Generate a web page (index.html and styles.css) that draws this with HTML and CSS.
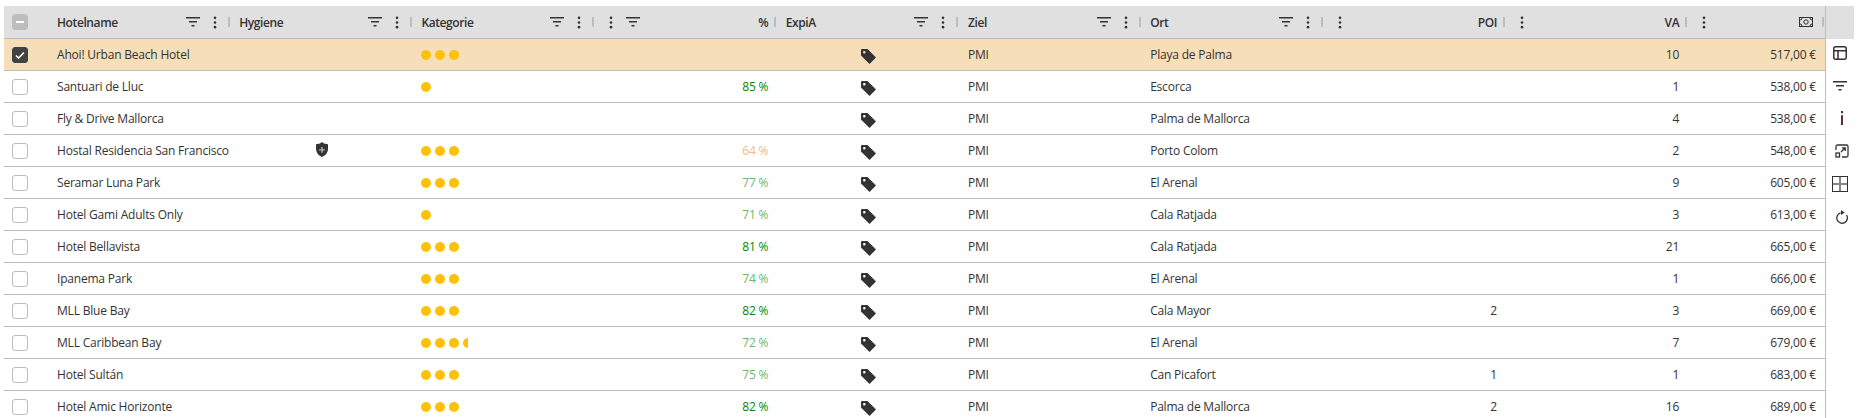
FILE: index.html
```html
<!DOCTYPE html>
<html lang="de">
<head>
  <meta charset="UTF-8">
  <title>Hotelliste</title>
  <link rel="stylesheet" href="styles.css">
</head>
<body>
  <svg class="sprites" width="0" height="0">
    <symbol id="i-filter" viewBox="0 0 14 10"><path d="M0 0h14v1.6H0zM3 4h8v1.6H3zM5.500 8h3v1.600h-3z"/></symbol>
    <symbol id="i-dots" viewBox="0 0 4 14"><circle cx="2" cy="2" r="1.400"/><circle cx="2" cy="7" r="1.400"/><circle cx="2" cy="12" r="1.400"/></symbol>
    <symbol id="i-tag" viewBox="0 0 15 15"><path fill-rule="evenodd" d="M1 0h5.500l8 8q.5.500 0 1l-5.500 5.500q-.5.500-1 0l-8-8V1q0-1 1-1zM3.300 2a1.300 1.300 0 1 0 0 2.600 1.300 1.300 0 0 0 0-2.600z"/></symbol>
  </svg>

  <div class="page">
    <div class="grid-wrap">
      <table class="grid">
        <colgroup>
          <col class="c-check"><col class="c-wide"><col class="c-wide"><col class="c-wide"><col class="c-wide"><col class="c-wide"><col class="c-wide"><col class="c-wide"><col class="c-wide"><col class="c-wide"><col>
        </colgroup>
        <thead>
          <tr>
            <th><span class="check check-some"></span></th>
            <th><div class="head"><span class="title">Hotelname</span><svg class="ico-filter"><use href="#i-filter"/></svg><svg class="ico-dots"><use href="#i-dots"/></svg><i class="sep"></i></div></th>
            <th><div class="head"><span class="title">Hygiene</span><svg class="ico-filter"><use href="#i-filter"/></svg><svg class="ico-dots"><use href="#i-dots"/></svg><i class="sep"></i></div></th>
            <th><div class="head"><span class="title">Kategorie</span><svg class="ico-filter"><use href="#i-filter"/></svg><svg class="ico-dots"><use href="#i-dots"/></svg><i class="sep"></i></div></th>
            <th><div class="head head-right"><svg class="ico-dots"><use href="#i-dots"/></svg><svg class="ico-filter"><use href="#i-filter"/></svg><span class="title">%</span><i class="sep"></i></div></th>
            <th><div class="head"><span class="title">ExpiA</span><svg class="ico-filter"><use href="#i-filter"/></svg><svg class="ico-dots"><use href="#i-dots"/></svg><i class="sep"></i></div></th>
            <th><div class="head"><span class="title">Ziel</span><svg class="ico-filter"><use href="#i-filter"/></svg><svg class="ico-dots"><use href="#i-dots"/></svg><i class="sep"></i></div></th>
            <th><div class="head"><span class="title">Ort</span><svg class="ico-filter"><use href="#i-filter"/></svg><svg class="ico-dots"><use href="#i-dots"/></svg><i class="sep"></i></div></th>
            <th><div class="head head-right"><svg class="ico-dots"><use href="#i-dots"/></svg><span class="title">POI</span><i class="sep"></i></div></th>
            <th><div class="head head-right"><svg class="ico-dots"><use href="#i-dots"/></svg><span class="title">VA</span><i class="sep"></i></div></th>
            <th><div class="head head-right head-last"><svg class="ico-dots"><use href="#i-dots"/></svg><span class="title"><svg class="ico-money" viewBox="0 0 14 10" fill="none" stroke="#333"><rect x=".5" y=".5" width="13" height="9"/><circle cx="7" cy="5" r="2.200"/><path d="M1 3q2 0 2-2M13 3q-2 0-2-2M1 7q2 0 2 2M13 7q-2 0-2 2"/></svg></span><i class="sep"></i></div></th>
          </tr>
        </thead>
        <tbody>
          <tr class="selected">
            <td><span class="check check-on"><svg viewBox="0 0 16 16"><path d="M4 8.500l2.500 2.500L12 5.500" fill="none" stroke="#fff" stroke-width="1.600"/></svg></span></td>
            <td>Ahoi! Urban Beach Hotel</td><td></td>
            <td><span class="dots"><i></i><i></i><i></i></span></td>
            <td class="num"></td>
            <td class="tag-cell"><svg class="ico-tag"><use href="#i-tag"/></svg></td>
            <td>PMI</td><td>Playa de Palma</td><td class="num"></td><td class="num">10</td><td class="num price">517,00 €</td>
          </tr>
          <tr>
            <td><span class="check"></span></td>
            <td>Santuari de Lluc</td><td></td>
            <td><span class="dots"><i></i></span></td>
            <td class="num pct-high">85 %</td>
            <td class="tag-cell"><svg class="ico-tag"><use href="#i-tag"/></svg></td>
            <td>PMI</td><td>Escorca</td><td class="num"></td><td class="num">1</td><td class="num price">538,00 €</td>
          </tr>
          <tr>
            <td><span class="check"></span></td>
            <td>Fly &amp; Drive Mallorca</td><td></td>
            <td></td>
            <td class="num"></td>
            <td class="tag-cell"><svg class="ico-tag"><use href="#i-tag"/></svg></td>
            <td>PMI</td><td>Palma de Mallorca</td><td class="num"></td><td class="num">4</td><td class="num price">538,00 €</td>
          </tr>
          <tr>
            <td><span class="check"></span></td>
            <td>Hostal Residencia San Francisco</td>
            <td class="hygiene"><svg class="ico-shield" viewBox="0 0 14 15"><path d="M7 0l2 1.500 4 .7V7q0 5-6 8Q1 12 1 7V2.200l4-.7z" fill="#333"/><path d="M6.200 5v2.200H4v1.400h2.200v2.200h1.600V8.600H10V7.200H7.800V5z" fill="#aaa"/></svg></td>
            <td><span class="dots"><i></i><i></i><i></i></span></td>
            <td class="num pct-low">64 %</td>
            <td class="tag-cell"><svg class="ico-tag"><use href="#i-tag"/></svg></td>
            <td>PMI</td><td>Porto Colom</td><td class="num"></td><td class="num">2</td><td class="num price">548,00 €</td>
          </tr>
          <tr>
            <td><span class="check"></span></td>
            <td>Seramar Luna Park</td><td></td>
            <td><span class="dots"><i></i><i></i><i></i></span></td>
            <td class="num pct-mid">77 %</td>
            <td class="tag-cell"><svg class="ico-tag"><use href="#i-tag"/></svg></td>
            <td>PMI</td><td>El Arenal</td><td class="num"></td><td class="num">9</td><td class="num price">605,00 €</td>
          </tr>
          <tr>
            <td><span class="check"></span></td>
            <td>Hotel Gami Adults Only</td><td></td>
            <td><span class="dots"><i></i></span></td>
            <td class="num pct-mid">71 %</td>
            <td class="tag-cell"><svg class="ico-tag"><use href="#i-tag"/></svg></td>
            <td>PMI</td><td>Cala Ratjada</td><td class="num"></td><td class="num">3</td><td class="num price">613,00 €</td>
          </tr>
          <tr>
            <td><span class="check"></span></td>
            <td>Hotel Bellavista</td><td></td>
            <td><span class="dots"><i></i><i></i><i></i></span></td>
            <td class="num pct-high">81 %</td>
            <td class="tag-cell"><svg class="ico-tag"><use href="#i-tag"/></svg></td>
            <td>PMI</td><td>Cala Ratjada</td><td class="num"></td><td class="num">21</td><td class="num price">665,00 €</td>
          </tr>
          <tr>
            <td><span class="check"></span></td>
            <td>Ipanema Park</td><td></td>
            <td><span class="dots"><i></i><i></i><i></i></span></td>
            <td class="num pct-mid">74 %</td>
            <td class="tag-cell"><svg class="ico-tag"><use href="#i-tag"/></svg></td>
            <td>PMI</td><td>El Arenal</td><td class="num"></td><td class="num">1</td><td class="num price">666,00 €</td>
          </tr>
          <tr>
            <td><span class="check"></span></td>
            <td>MLL Blue Bay</td><td></td>
            <td><span class="dots"><i></i><i></i><i></i></span></td>
            <td class="num pct-high">82 %</td>
            <td class="tag-cell"><svg class="ico-tag"><use href="#i-tag"/></svg></td>
            <td>PMI</td><td>Cala Mayor</td><td class="num">2</td><td class="num">3</td><td class="num price">669,00 €</td>
          </tr>
          <tr>
            <td><span class="check"></span></td>
            <td>MLL Caribbean Bay</td><td></td>
            <td><span class="dots"><i></i><i></i><i></i><i class="half"></i></span></td>
            <td class="num pct-mid">72 %</td>
            <td class="tag-cell"><svg class="ico-tag"><use href="#i-tag"/></svg></td>
            <td>PMI</td><td>El Arenal</td><td class="num"></td><td class="num">7</td><td class="num price">679,00 €</td>
          </tr>
          <tr>
            <td><span class="check"></span></td>
            <td>Hotel Sultán</td><td></td>
            <td><span class="dots"><i></i><i></i><i></i></span></td>
            <td class="num pct-mid">75 %</td>
            <td class="tag-cell"><svg class="ico-tag"><use href="#i-tag"/></svg></td>
            <td>PMI</td><td>Can Picafort</td><td class="num">1</td><td class="num">1</td><td class="num price">683,00 €</td>
          </tr>
          <tr>
            <td><span class="check"></span></td>
            <td>Hotel Amic Horizonte</td><td></td>
            <td><span class="dots"><i></i><i></i><i></i></span></td>
            <td class="num pct-high">82 %</td>
            <td class="tag-cell"><svg class="ico-tag"><use href="#i-tag"/></svg></td>
            <td>PMI</td><td>Palma de Mallorca</td><td class="num">2</td><td class="num">16</td><td class="num price">689,00 €</td>
          </tr>
        </tbody>
      </table>
    </div>

    <aside class="side">
      <div class="side-head"></div>
      <div class="side-tools">
        <svg viewBox="0 0 14 14" fill="none" stroke="#333" stroke-width="1.500"><rect x=".8" y=".8" width="12.400" height="12.400" rx="2"/><path d="M.8 4.800h12.400M5 4.800v8.400"/></svg>
        <svg viewBox="0 0 14 14" fill="#333"><path d="M0 2h14v1.500H0zM3 6h8v1.500H3zM5.500 10h3v1.500h-3z"/></svg>
        <svg class="tool-shift" viewBox="0 0 14 14" fill="#5e2a3c"><path d="M6 0h2v2.200H6zM6 4.200h2V14H6z"/></svg>
        <svg class="tool-shift" viewBox="0 0 14 14" fill="none" stroke="#333" stroke-width="1.300"><path d="M1 6V2.500Q1 1 2.500 1h9Q13 1 13 2.500v9q0 1.500-1.500 1.500H7"/><rect x="1" y="9" width="3.500" height="4"/><path d="M6 8l4-4M7 3.800h3.200V7"/></svg>
        <svg class="tool-grid" viewBox="0 0 16 16" fill="none"><path d="M8 1v14M1 8h14" stroke="#888" stroke-width="2"/><rect x=".5" y=".5" width="15" height="15" stroke="#333"/></svg>
        <svg class="tool-shift tool-refresh" viewBox="0 0 14 14" fill="none" stroke="#333" stroke-width="1.300"><path d="M5.500 2.900A5.300 5.300 0 1 0 11.500 5"/><path d="M6 0v5l3.700-2.500z" fill="#333" stroke="none"/></svg>
      </div>
    </aside>
  </div>
</body>
</html>
```

FILE: styles.css
```css
* {
  margin: 0;
  padding: 0;
  box-sizing: border-box;
}

html,
body {
  height: 100%;
  overflow: hidden;
}

body {
  font-family: 'Open Sans', sans-serif;
  font-size: 12px;
  letter-spacing: -0.2px;
  color: #333;
  background-color: #fff;
}

.sprites {
  position: absolute;
}

.page {
  display: flex;
  height: 100%;
  margin: 6px 6px 0 4px;
}

.grid-wrap {
  width: 1821px;
  flex-shrink: 0;
}

.grid {
  width: 100%;
  table-layout: fixed;
  border-collapse: separate;
  border-spacing: 0;
}

.c-check {
  width: 43.5px;
}

.c-wide {
  width: 182.2px;
}

thead th {
  height: 33px;
  padding: 0;
  background-color: #e0e0e0;
  border-bottom: 1px solid #bdbdbd;
  font-weight: 600;
  letter-spacing: -0.4px;
  text-align: left;
  vertical-align: middle;
}

tbody td {
  height: 32px;
  padding: 0 0 0 9.5px;
  border-bottom: 1px solid #bdbdbd;
  white-space: nowrap;
  overflow: hidden;
  vertical-align: middle;
}

thead th:first-child,
tbody td:first-child {
  padding: 0 0 0 8px;
}

tbody tr.selected td {
  background-color: #f6deb8;
}

.check {
  display: block;
  width: 16px;
  height: 16px;
  border: 1px solid #bdbdbd;
  border-radius: 3px;
  background-color: #fff;
}

.check svg {
  display: block;
  width: 16px;
  height: 16px;
  margin: -1px;
}

.check-on {
  background-color: #424242;
  border-color: #424242;
}

.check-some {
  position: relative;
  background-color: #bdbdbd;
}

.check-some::after {
  content: "";
  position: absolute;
  left: 3px;
  right: 3px;
  top: 6px;
  height: 2px;
  background-color: #fff;
}

.head {
  display: flex;
  align-items: center;
  height: 32px;
  padding-left: 9.5px;
}

.head .title {
  flex: 1;
}

.head-right .title {
  text-align: right;
}

.ico-filter {
  width: 14px;
  height: 10px;
  fill: #333;
  flex-shrink: 0;
}

.ico-dots {
  width: 4px;
  height: 13px;
  margin: 0 11px 0 13px;
  fill: #333;
  flex-shrink: 0;
}

.head-right .ico-dots {
  margin: 0 0 0 5.5px;
}

.head-right .ico-filter {
  margin-left: 13px;
}

.sep {
  width: 2px;
  height: 10px;
  background-color: #bdbdbd;
  flex-shrink: 0;
}

.head-right .title + .sep {
  margin-left: 6px;
}

.head-last .sep {
  margin-right: 1px;
}

.ico-money {
  display: block;
  width: 14px;
  height: 10px;
  margin: 0 3px 0 auto;
}

tbody td.num {
  text-align: right;
  padding: 0 8px 0 0;
}

tbody td.price {
  padding-right: 9px;
}

.pct-high {
  color: #008a00;
}

.pct-mid {
  color: #66bb6a;
}

.pct-low {
  color: #f0bd7c;
}

.dots {
  display: flex;
  gap: 4px;
}

.dots i {
  width: 10px;
  height: 10px;
  border-radius: 50%;
  background-color: #ffc107;
}

.dots i.half {
  width: 5px;
  border-radius: 5px 0 0 5px;
}

tbody td.tag-cell {
  padding-left: 85px;
}

.ico-tag {
  display: block;
  width: 15px;
  height: 15px;
  margin-top: 3px;
  fill: #333;
}

tbody td.hygiene {
  padding-left: 85px;
}

.ico-shield {
  display: block;
  width: 14px;
  height: 15px;
  margin-top: -3px;
}

.side {
  width: 29px;
  flex-shrink: 0;
  border-left: 1px solid #bdbdbd;
}

.side-head {
  height: 33px;
  background-color: #e0e0e0;
}

.side-tools {
  display: flex;
  flex-direction: column;
  align-items: center;
  gap: 18.6px;
  padding-top: 7px;
}

.side-tools svg {
  display: block;
  width: 14px;
  height: 14px;
}

.side-tools .tool-shift {
  margin-left: 3px;
}

.side-tools .tool-grid {
  width: 16px;
  height: 16px;
}

.side-tools .tool-refresh {
  margin-top: -1px;
}
```
